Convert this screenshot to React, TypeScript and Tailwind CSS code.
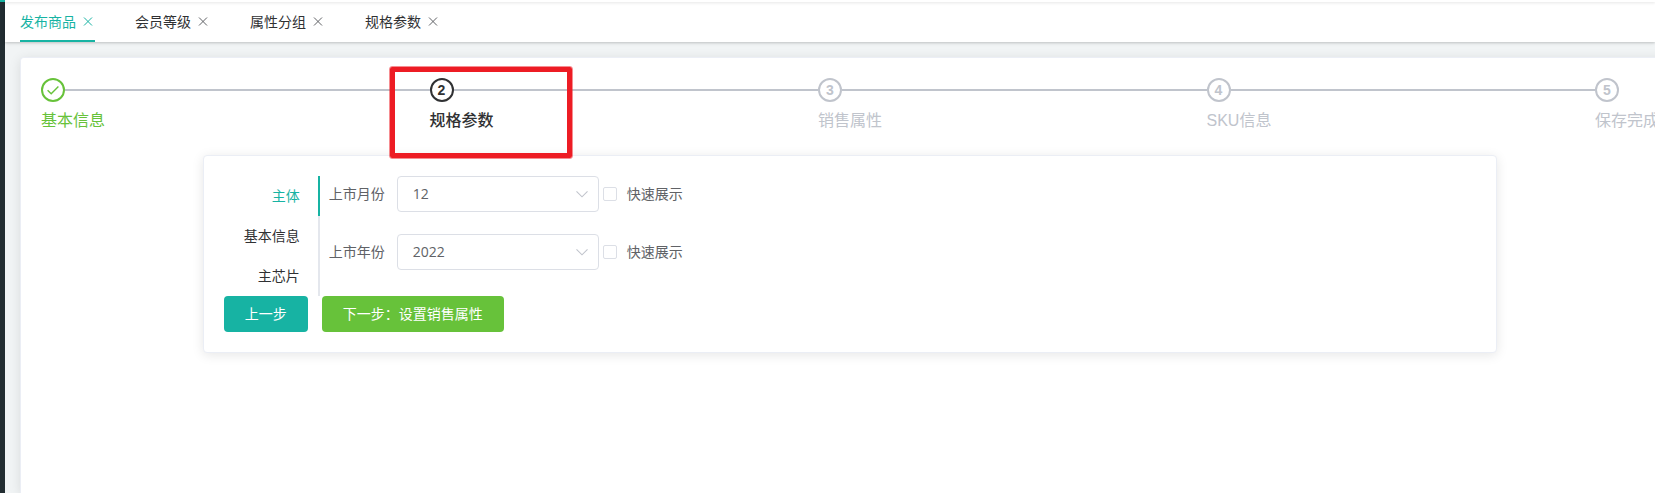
import { useState } from 'react';
import clsx from 'clsx';

const pages = ['发布商品', '会员等级', '属性分组', '规格参数'];
const steps = ['基本信息', '规格参数', '销售属性', 'SKU信息', '保存完成'];
const groups = ['主体', '基本信息', '主芯片'];
const attrs = [
  { id: 'month', label: '上市月份', options: ['12', '11', '10'] },
  { id: 'year', label: '上市年份', options: ['2022', '2021', '2020'] },
];

const CURRENT_STEP = 1;

function CloseIcon() {
  return (
    <svg viewBox="0 0 14 14" className="h-3.5 w-3.5" fill="none" stroke="currentColor" strokeWidth="1">
      <path d="M3 3.500l8 8M11 3.500l-8 8" />
    </svg>
  );
}

function PageTabs() {
  const [active, setActive] = useState(0);

  return (
    <nav className="relative flex h-10 gap-10 bg-white px-[15px] shadow-[0_1px_2px_0_rgba(0,0,0,0.12),0_1px_4px_0_rgba(0,0,0,0.1)]">
      {pages.map((page, idx) => (
        <div
          key={page}
          className={clsx(
            'flex items-center gap-[5px] border-b-2 text-sm',
            idx === active ? 'border-[#17b3a3] text-[#17b3a3]' : 'border-transparent text-[#303133]'
          )}
        >
          <button onClick={() => setActive(idx)}>{page}</button>
          <button aria-label="关闭" className={idx === active ? '' : 'text-[#606266]'}>
            <CloseIcon />
          </button>
        </div>
      ))}
    </nav>
  );
}

function Steps() {
  return (
    <ol className="flex">
      {steps.map((title, idx) => {
        const last = idx === steps.length - 1;
        return (
          <li
            key={title}
            className={clsx(
              'relative',
              last ? 'shrink-0' : 'flex-1',
              idx < CURRENT_STEP && 'text-[#67c23a]',
              idx === CURRENT_STEP && 'font-medium text-[#303133]',
              idx > CURRENT_STEP && 'text-[#c0c4cc]'
            )}
          >
            <div className="flex items-center">
              <div className="flex h-6 w-6 items-center justify-center rounded-full border-2 border-current font-['Liberation_Sans',sans-serif] text-sm leading-none font-bold">
                {idx < CURRENT_STEP ? (
                  <svg viewBox="0 0 14 14" className="h-3.5 w-3.5" fill="none" stroke="currentColor" strokeWidth="1.400">
                    <path d="M1.600 7.200l3.600 3.600L12.400 3.600" />
                  </svg>
                ) : (
                  idx + 1
                )}
              </div>
              {!last && <div className="h-0.5 flex-1 bg-[#c0c4cc]" />}
            </div>
            <div className="font-['Liberation_Sans','Noto_Sans_CJK_SC',sans-serif] text-base leading-[38px] whitespace-nowrap">
              {title}
            </div>
            {idx === CURRENT_STEP && (
              <div className="pointer-events-none absolute -top-[11px] -left-10 z-10 h-[91px] w-[182px] rounded-xs border-5 border-[#ed1c24] outline outline-[#ed1c24]/50" />
            )}
          </li>
        );
      })}
    </ol>
  );
}

function AttrRow({ id, label, options }: { id: string; label: string; options: string[] }) {
  return (
    <div className="flex items-center">
      <label htmlFor={id} className="pr-3 pb-0.5">
        {label}
      </label>
      <div className="relative">
        <select
          id={id}
          className="h-9 w-[202px] appearance-none rounded border border-[#dcdfe6] bg-white px-[15px] font-['Open_Sans',sans-serif] text-sm outline-none"
        >
          {options.map((option) => (
            <option key={option}>{option}</option>
          ))}
        </select>
        <svg
          viewBox="0 0 14 14"
          className="pointer-events-none absolute top-[11px] right-2.5 h-3.5 w-3.5 text-[#c0c4cc]"
          fill="none"
          stroke="currentColor"
          strokeWidth="1.1"
        >
          <path d="M1.5 4.3L7 9.8l5.500-5.500" />
        </svg>
      </div>
      <label className="ml-1 flex items-center gap-2.5">
        <input
          type="checkbox"
          className="h-3.5 w-3.5 appearance-none rounded-xs border border-[#dcdfe6] bg-white checked:border-[#17b3a3] checked:bg-[#17b3a3]"
        />
        <span className="pb-0.5">快速展示</span>
      </label>
    </div>
  );
}

function SpecCard() {
  const [group, setGroup] = useState(0);

  return (
    <section className="mx-auto mt-[15px] w-4/5 rounded border border-[#ebeef5] bg-white p-5 shadow-[0_2px_12px_0_rgba(0,0,0,0.1)]">
      <div className="flex gap-[9px]">
        <div className="flex w-24 flex-col">
          {groups.map((name, idx) => (
            <button
              key={name}
              onClick={() => setGroup(idx)}
              className={clsx(
                'h-10 border-r-2 pr-[18px] pb-0.5 text-right text-sm',
                idx === group ? 'border-[#17b3a3] text-[#17b3a3]' : 'border-[#e4e7ed] text-[#303133]'
              )}
            >
              {name}
            </button>
          ))}
        </div>
        <form className="flex flex-col gap-[22px] text-sm text-[#606266]">
          {attrs.map((attr) => (
            <AttrRow key={attr.id} {...attr} />
          ))}
        </form>
      </div>
      <div className="flex gap-3.5 text-sm text-white">
        <button className="h-9 rounded bg-[#17b3a3] px-[21px] pb-0.5">上一步</button>
        <button className="h-9 rounded bg-[#67c23a] px-[21px] pb-0.5">下一步：设置销售属性</button>
      </div>
    </section>
  );
}

export default function App() {
  return (
    <div className="flex min-h-screen overflow-hidden bg-[#f1f4f5] font-['Noto_Sans_CJK_SC',sans-serif]">
      <aside className="w-[5px] shrink-0 border-t-2 border-[#17b3a3] bg-[#222d32]" />
      <div className="flex min-w-0 flex-1 flex-col">
        <header className="relative z-10 h-0.5 bg-white shadow-[0_1px_3px_0_rgba(0,0,0,0.12)]" />
        <PageTabs />
        {/* the panel is a little wider than the window and runs off its right edge */}
        <main className="-mr-[25px] ml-[15px] mt-[15px] flex-1 rounded-t border border-b-0 border-[#ebeef5] bg-white p-5 shadow-[0_2px_12px_0_rgba(0,0,0,0.1)]">
          <Steps />
          <SpecCard />
        </main>
      </div>
    </div>
  );
}
